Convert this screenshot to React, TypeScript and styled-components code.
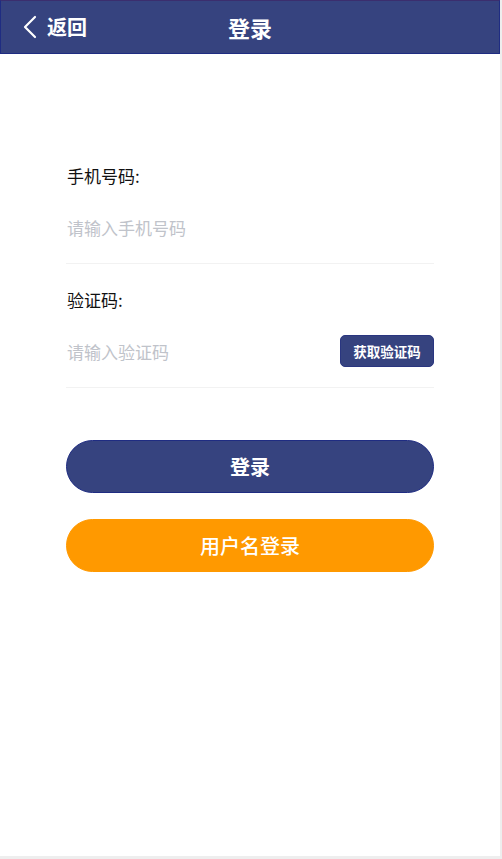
import React, { useState } from 'react';
import styled, { createGlobalStyle } from 'styled-components';

const GlobalStyle = createGlobalStyle`
  html, body {
    margin: 0;
    padding: 0;
    background: #eeeeee;
  }
  * {
    box-sizing: border-box;
  }
`;

const NAVY = '#36437f';
const FONT = '"Noto Sans CJK SC", "Noto Sans", sans-serif';

const Page = styled.div`
  width: 500px;
  min-height: 856px;
  background: #ffffff;
  font-family: ${FONT};
  display: flex;
  flex-direction: column;
`;

const Header = styled.header`
  height: 54px;
  background: ${NAVY};
  border: 1px solid #1f2c82;
  border-top-color: #3b2e6e;
  display: grid;
  grid-template-columns: 1fr auto 1fr;
  align-items: center;
  color: #ffffff;
`;

const BackButton = styled.button`
  justify-self: start;
  display: flex;
  align-items: center;
  gap: 9px;
  margin-left: 21px;
  padding: 0;
  background: none;
  border: none;
  color: #ffffff;
  font-family: ${FONT};
  font-size: 20px;
  font-weight: 700;
  line-height: 24px;
  cursor: pointer;
`;

const Title = styled.h1`
  margin: 0;
  font-size: 22px;
  font-weight: 700;
  line-height: 28px;
`;

const Form = styled.form`
  margin: 86px 66px 0 66px;
  width: 368px;
  display: flex;
  flex-direction: column;
`;

const Field = styled.div`
  padding-top: 25px;
  padding-bottom: 12px;
  border-bottom: 1px solid #f2f2f2;
`;

const Label = styled.label`
  display: block;
  font-size: 17px;
  line-height: 22px;
  color: #111111;
  padding-left: 1px;
`;

const InputRow = styled.div`
  margin-top: 16px;
  height: 48px;
  display: flex;
  align-items: center;
  justify-content: space-between;
`;

const Input = styled.input`
  flex: 1;
  min-width: 0;
  height: 100%;
  border: none;
  outline: none;
  padding: 0 0 0 1px;
  font-family: ${FONT};
  font-size: 17px;
  color: #222222;
  caret-color: #222222;
  background: transparent;

  &::placeholder {
    color: #c0c3ca;
  }
`;

const CodeButton = styled.button`
  width: 94px;
  height: 32px;
  border: 1px solid #2a3680;
  border-radius: 5px;
  background: ${NAVY};
  color: #ffffff;
  font-family: ${FONT};
  font-size: 13.5px;
  font-weight: 700;
  padding: 0;
  cursor: pointer;
`;

const Actions = styled.div`
  margin-top: 52px;
  display: flex;
  flex-direction: column;
  gap: 26px;
`;

const PillButton = styled.button<{ $tone: 'navy' | 'orange' }>`
  height: 53px;
  border-radius: 27px;
  border: 1px solid ${(p) => (p.$tone === 'navy' ? '#1f2c82' : '#ff9900')};
  background: ${(p) => (p.$tone === 'navy' ? NAVY : '#ff9900')};
  color: #ffffff;
  font-family: ${FONT};
  font-size: 20px;
  font-weight: ${(p) => (p.$tone === 'navy' ? 700 : 500)};
  cursor: pointer;
`;

const ChevronLeft = () => (
  <svg width="16" height="24" viewBox="0 0 16 24" fill="none">
    <path d="M13 2 L3 12 L13 22" stroke="#ffffff" strokeWidth="2.2" strokeLinecap="round" strokeLinejoin="round" />
  </svg>
);

const App = () => {
  const [phone, setPhone] = useState('');
  const [code, setCode] = useState('');

  return (
    <>
      <GlobalStyle />
      <Page>
        <Header>
          <BackButton type="button">
            <ChevronLeft />
            返回
          </BackButton>
          <Title>登录</Title>
          <span />
        </Header>

        <Form onSubmit={(e) => e.preventDefault()}>
          <Field>
            <Label htmlFor="phone">手机号码:</Label>
            <InputRow>
              <Input
                id="phone"
                autoFocus
                placeholder="请输入手机号码"
                value={phone}
                onChange={(e) => setPhone(e.target.value)}
              />
            </InputRow>
          </Field>
          <Field>
            <Label htmlFor="code">验证码:</Label>
            <InputRow>
              <Input
                id="code"
                placeholder="请输入验证码"
                value={code}
                onChange={(e) => setCode(e.target.value)}
              />
              <CodeButton type="button">获取验证码</CodeButton>
            </InputRow>
          </Field>

          <Actions>
            <PillButton $tone="navy" type="submit">登录</PillButton>
            <PillButton $tone="orange" type="button">用户名登录</PillButton>
          </Actions>
        </Form>
      </Page>
    </>
  );
};

export default App;
